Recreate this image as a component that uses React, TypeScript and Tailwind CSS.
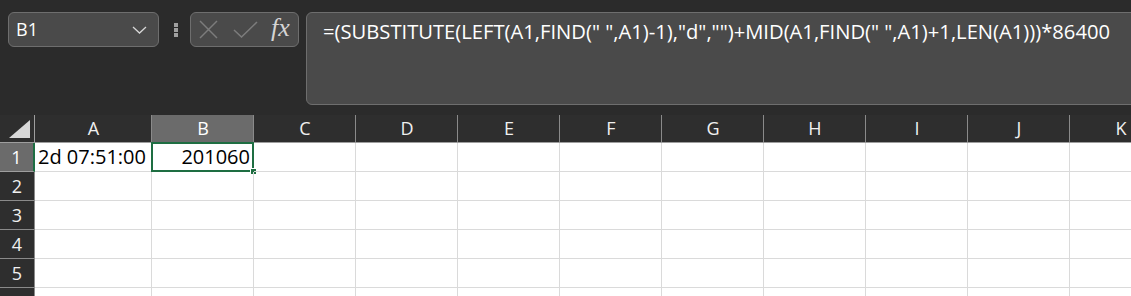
import * as React from 'react'

const COLS = ['A', 'B', 'C', 'D', 'E', 'F', 'G', 'H', 'I', 'J', 'K']
const ROWS = [1, 2, 3, 4, 5, 6]

const FORMULA = '=(SUBSTITUTE(LEFT(A1,FIND(" ",A1)-1),"d","")+MID(A1,FIND(" ",A1)+1,LEN(A1)))*86400'

function NameBox() {
  return (
    <div className="shrink-0 ml-[8px] w-[151px] h-[35px] rounded-[6px] border border-[#6e6e6e] bg-[#4a4a4a] flex items-center justify-between pl-[7px] pr-[11px]">
      <span className="text-[18px] text-white">B1</span>
      <svg width="15" height="8" viewBox="0 0 15 8" fill="none">
        <path d="M1 1l6.5 6 6.5-6" stroke="#d6d6d6" strokeWidth="1.3" />
      </svg>
    </div>
  )
}

function FxBox() {
  return (
    <div className="shrink-0 w-[109px] h-[35px] rounded-[6px] border border-[#6e6e6e] bg-[#4a4a4a] flex items-center pl-[8px]">
      <svg width="19" height="19" viewBox="0 0 19 19" fill="none">
        <path d="M1 1l17 17M18 1L1 18" stroke="#7c7c7c" strokeWidth="1.5" />
      </svg>
      <svg width="25" height="17" viewBox="0 0 25 17" fill="none" className="ml-[15px]">
        <path d="M1 9l7.5 7L24 1" stroke="#7c7c7c" strokeWidth="1.5" />
      </svg>
      <span
        className="ml-[13px] text-[26px] leading-none italic text-[#d4d4d4] -mt-[3px]"
        style={{ fontFamily: '"Liberation Serif", serif' }}
      >
        fx
      </span>
    </div>
  )
}

export default function App() {
  return (
    <div
      className="w-[1131px] h-[296px] overflow-hidden bg-[#2b2b2b] text-white"
      style={{ fontFamily: '"Open Sans", "Noto Sans", sans-serif' }}
    >
      {/* 公式栏 */}
      <div className="h-[115px] pt-[12px] flex items-start">
        <NameBox />
        <div className="shrink-0 w-[31px] h-[35px] flex flex-col items-center justify-center gap-[1px] pl-[3px]">
          <div className="w-[4px] h-[4px] bg-[#a0a0a0]" />
          <div className="w-[4px] h-[4px] bg-[#a0a0a0]" />
          <div className="w-[4px] h-[4px] bg-[#a0a0a0]" />
        </div>
        <FxBox />
        <div className="shrink-0 ml-[7px] w-[840px] h-[93px] rounded-[6px] border border-[#6e6e6e] bg-[#4a4a4a] pl-[16px] pt-[3px]">
          <span className="text-[20.2px] whitespace-nowrap text-white">{FORMULA}</span>
        </div>
      </div>

      {/* 表格 */}
      <div className="grid grid-cols-[35px_117px_repeat(10,102px)] grid-rows-[28px_repeat(6,29px)] bg-white">
        {/* 表头 */}
        <div className="bg-[#2e2e2e] border-r border-b border-[#9e9e9e] flex items-end justify-end pr-[4px] pb-[4px]">
          <svg width="21" height="18" viewBox="0 0 21 18">
            <path d="M21 0V18H0Z" fill="#d8d8d8" />
          </svg>
        </div>
        {COLS.map((c) => (
          <div
            key={c}
            className={
              c === 'B'
                ? 'bg-[#6b6b6b] border-b border-[#9e9e9e] flex items-center justify-center text-[18px] text-white relative'
                : 'bg-[#2e2e2e] border-b border-[#9e9e9e] flex items-center justify-center text-[18px] text-[#f0f0f0] relative'
            }
          >
            {c}
            <div className="absolute right-0 top-0 bottom-0 w-px bg-[#8a8a8a]" />
          </div>
        ))}

        {ROWS.map((r) => (
          <React.Fragment key={r}>
            <div
              className={
                r === 1
                  ? 'bg-[#6b6b6b] border-b border-r-2 border-b-[#9e9e9e] border-r-[#1e6e42] flex items-center justify-center text-[18px] text-white'
                  : 'bg-[#2e2e2e] border-b border-r border-[#8a8a8a] flex items-center justify-center text-[18px] text-[#f0f0f0]'
              }
            >
              {r < 6 ? r : ''}
            </div>
            {COLS.map((c) => (
              <div key={c} className="border-r border-b border-[#dadada] relative text-black text-[20px] flex items-center">
                {r === 1 && c === 'A' && <span className="pl-[3px] whitespace-nowrap">2d 07:51:00</span>}
                {r === 1 && c === 'B' && (
                  <>
                    <span className="ml-auto pr-[3px] whitespace-nowrap">201060</span>
                    <div className="absolute -left-[1px] -top-[1px] -right-[1px] -bottom-[1px] border-2 border-[#1e6e42]" />
                    <div className="absolute -right-[4px] -bottom-[4px] w-[7px] h-[7px] bg-[#1e6e42] border border-white" />
                  </>
                )}
              </div>
            ))}
          </React.Fragment>
        ))}
      </div>
    </div>
  )
}
